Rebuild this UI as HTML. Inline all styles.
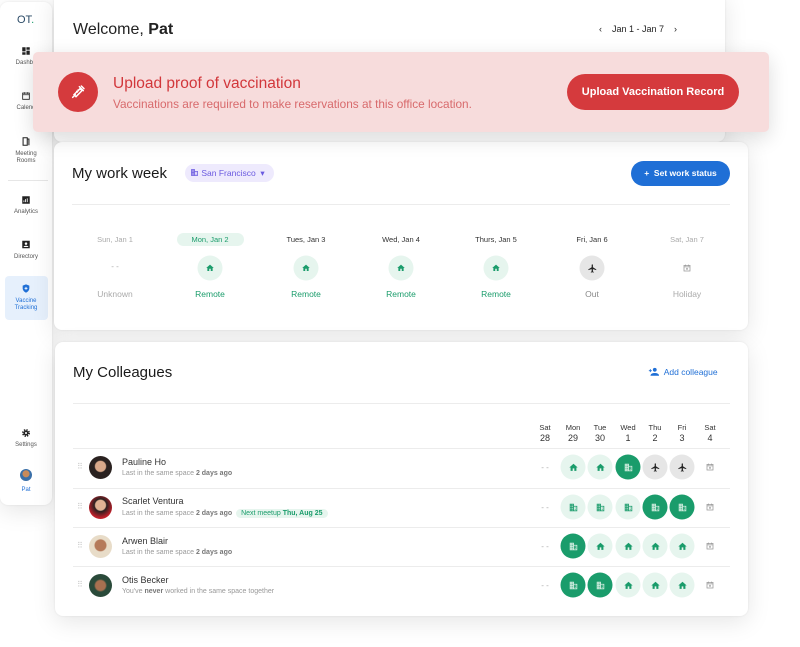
<!DOCTYPE html>
<html><head><meta charset="utf-8"><style>
*{box-sizing:border-box;margin:0;padding:0}
body{width:800px;height:647px;background:#fff;position:relative;overflow:hidden;font-family:"Liberation Sans",sans-serif;color:#222}
.card{position:absolute;background:#fff;border-radius:8px;box-shadow:0 6px 24px rgba(0,0,0,.10),0 0 2px rgba(0,0,0,.08)}
.abs{position:absolute}
.side{left:0;top:2px;width:52px;height:503px}
.nav{position:absolute;left:0;width:52px;text-align:center;font-size:6px;color:#555;line-height:7px}
.nav svg{display:block;margin:0 auto 4px}
.c{position:absolute;text-align:center;transform:translateX(-50%)}
.circ{position:absolute;width:25px;height:25px;border-radius:50%;display:flex;align-items:center;justify-content:center;transform:translate(-50%,-50%)}
.lg{background:#e6f5ee}.dg{background:#1a9c6b}.gy{background:#e6e6e6}
.name{position:absolute;left:122px;font-size:9px;color:#333}
.sub{position:absolute;left:122px;font-size:7px;color:#999}
.sub b{color:#777;font-weight:bold}
.hr{position:absolute;height:1px;background:#ececec}
</style></head><body>
<svg width="0" height="0" style="position:absolute">
<symbol id="home" viewBox="0 0 24 24"><path d="M10 20v-6h4v6h5v-8h3L12 3 2 12h3v8z"/></symbol>
<symbol id="bld" viewBox="0 0 24 24"><path d="M3 21V3h10v5h8v13zM5 5v2h2V5zm4 0v2h2V5zM5 9v2h2V9zm4 0v2h2V9zM5 13v2h2v-2zm4 0v2h2v-2zM5 17v2h2v-2zm4 0v2h2v-2zm4-7v9h6v-9zm2 2h2v2h-2zm0 4h2v2h-2z"/></symbol>
<symbol id="plane" viewBox="0 0 24 24"><path d="M21 16v-2l-8-5V3.5a1.5 1.5 0 0 0-3 0V9l-8 5v2l8-2.5V19l-2 1.5V22l3.5-1 3.5 1v-1.5L13 19v-5.5z"/></symbol>
<symbol id="cal" viewBox="0 0 24 24"><path fill="none" stroke="currentColor" stroke-width="2" d="M4 5h16v15H4zM4 9h16M8 3v4M16 3v4M10 12l4 4M14 12l-4 4"/></symbol>
</svg>

<div class="card side">
 <div class="abs" style="left:17px;top:12px;font-size:11px;color:#2a4a66">OT<span style="color:#1a9c6b">.</span></div>
 <div class="nav" style="top:44px"><svg width="10" height="10" viewBox="0 0 24 24"><path d="M3 3h8v10H3zm10 0h8v6h-8zM3 15h8v6H3zm10-4h8v10h-8z" fill="#222"/></svg>Dashbo</div>
 <div class="nav" style="top:89px"><svg width="10" height="10" viewBox="0 0 24 24"><path d="M4 5h16v15H4zM4 9h16M8 3v4M16 3v4" fill="none" stroke="#222" stroke-width="2"/></svg>Calend</div>
 <div class="nav" style="top:134px"><svg width="10" height="11" viewBox="0 0 24 24"><path d="M5 21V3h10v18zm10-15h4v15" fill="none" stroke="#222" stroke-width="2.5"/></svg>Meeting<br>Rooms</div>
 <div class="abs" style="left:8px;top:178px;width:40px;height:1px;background:#e6e6e6"></div>
 <div class="nav" style="top:193px"><svg width="10" height="10" viewBox="0 0 24 24"><path d="M3 3h18v18H3z" fill="#222"/><path d="M7 17v-4M11 17v-7M15 17v-9" stroke="#fff" stroke-width="2"/></svg>Analytics</div>
 <div class="nav" style="top:237px"><svg width="10" height="11" viewBox="0 0 24 24"><path d="M3 3h18v18H3z" fill="#222"/><circle cx="12" cy="10" r="3" fill="#fff"/><path d="M6 18c1-4 11-4 12 0z" fill="#fff"/></svg>Directory</div>
 <div class="abs" style="left:5px;top:274px;width:43px;height:44px;background:#e6f0fc;border-radius:4px"></div>
 <div class="nav" style="top:281px;color:#1f6fd6"><svg width="10" height="11" viewBox="0 0 24 24"><path d="M12 2l8 3v6c0 5-3.5 9-8 11-4.5-2-8-6-8-11V5z" fill="#1f6fd6"/><path d="M12 8v7M8.5 11.5h7" stroke="#fff" stroke-width="2"/></svg>Vaccine<br>Tracking</div>
 <div class="nav" style="top:426px"><svg width="10" height="10" viewBox="0 0 24 24"><circle cx="12" cy="12" r="7" fill="none" stroke="#222" stroke-width="5" stroke-dasharray="3 2.5"/><circle cx="12" cy="12" r="6" fill="#222"/><circle cx="12" cy="12" r="2.5" fill="#fff"/></svg>Settings</div>
 <div class="abs" style="left:20px;top:467px;width:12px;height:12px;border-radius:50%;background:radial-gradient(circle at 50% 40%,#c98a5a 35%,#3a6fa8 40%)"></div>
 <div class="nav" style="top:485px;color:#1f6fd6">Pat</div>
</div>

<div class="card" style="left:54px;top:-8px;width:671px;height:150px">
 <div class="abs" style="left:19px;top:29px;font-size:16px;color:#222">Welcome, <b>Pat</b></div>
 <div class="abs" style="left:545px;top:32px;font-size:9px;color:#222">‹ &nbsp;&nbsp; Jan 1 - Jan 7 &nbsp;&nbsp; ›</div>
</div>

<div class="card" style="left:54px;top:142px;width:694px;height:188px">
 <div class="abs" style="left:18px;top:23px;font-size:15px;color:#1a1a1a">My work week</div>
 <div class="abs" style="left:131px;top:22px;width:89px;height:18px;border-radius:9px;background:#eeeafd;color:#6a5ae0;font-size:8.5px;line-height:18px;padding-left:5px"><svg width="9" height="9" viewBox="0 0 24 24" style="vertical-align:-1px;fill:#6a5ae0"><use href="#bld"/></svg> San Francisco &nbsp;▾</div>
 <div class="abs" style="left:577px;top:19px;width:99px;height:25px;border-radius:13px;background:#1f6fd6;color:#fff;font-size:8.5px;font-weight:bold;line-height:25px;text-align:center">+ &nbsp;Set work status</div>
 <div class="hr" style="left:18px;top:62px;width:658px"></div>
</div>
<div class="abs" style="left:0;top:0;width:800px;height:647px;pointer-events:none">
 <div class="c" style="left:115px;top:235px;font-size:7.5px;color:#aaa">Sun, Jan 1</div>
 <div class="abs" style="left:177px;top:233px;width:67px;height:13px;border-radius:7px;background:#e6f5ee"></div>
 <div class="c" style="left:210px;top:235px;font-size:7.5px;color:#1a9c6b">Mon, Jan 2</div>
 <div class="c" style="left:306px;top:235px;font-size:7.5px;color:#333">Tues, Jan 3</div>
 <div class="c" style="left:401px;top:235px;font-size:7.5px;color:#333">Wed, Jan 4</div>
 <div class="c" style="left:496px;top:235px;font-size:7.5px;color:#333">Thurs, Jan 5</div>
 <div class="c" style="left:592px;top:235px;font-size:7.5px;color:#333">Fri, Jan 6</div>
 <div class="c" style="left:687px;top:235px;font-size:7.5px;color:#aaa">Sat, Jan 7</div>
 <div class="c" style="left:115px;top:262px;font-size:8px;color:#aaa">- -</div>
 <div class="circ lg" style="left:210px;top:268px"><svg width="9" height="9" fill="#1a9c6b"><use href="#home"/></svg></div>
 <div class="circ lg" style="left:306px;top:268px"><svg width="9" height="9" fill="#1a9c6b"><use href="#home"/></svg></div>
 <div class="circ lg" style="left:401px;top:268px"><svg width="9" height="9" fill="#1a9c6b"><use href="#home"/></svg></div>
 <div class="circ lg" style="left:496px;top:268px"><svg width="9" height="9" fill="#1a9c6b"><use href="#home"/></svg></div>
 <div class="circ gy" style="left:592px;top:268px"><svg width="10" height="10" fill="#222"><use href="#plane"/></svg></div>
 <div class="circ" style="left:687px;top:268px;color:#999"><svg width="9" height="9"><use href="#cal"/></svg></div>
 <div class="c" style="left:115px;top:289px;font-size:8.5px;color:#aaa">Unknown</div>
 <div class="c" style="left:210px;top:289px;font-size:8.5px;color:#1a9c6b">Remote</div>
 <div class="c" style="left:306px;top:289px;font-size:8.5px;color:#1a9c6b">Remote</div>
 <div class="c" style="left:401px;top:289px;font-size:8.5px;color:#1a9c6b">Remote</div>
 <div class="c" style="left:496px;top:289px;font-size:8.5px;color:#1a9c6b">Remote</div>
 <div class="c" style="left:592px;top:289px;font-size:8.5px;color:#888">Out</div>
 <div class="c" style="left:687px;top:289px;font-size:8.5px;color:#aaa">Holiday</div>
</div>

<div class="card" style="left:55px;top:342px;width:693px;height:274px">
 <div class="abs" style="left:18px;top:22px;font-size:15px;color:#1a1a1a">My Colleagues</div>
 <div class="abs" style="left:593px;top:25px;font-size:8.5px;color:#1f6fd6"><svg width="11" height="9" viewBox="0 0 26 20" fill="#1f6fd6" style="vertical-align:-1px"><circle cx="16" cy="6" r="4.5"/><path d="M7 19c1-6 17-6 18 0zM2 8h7M5.5 4.5v7" stroke="#1f6fd6" stroke-width="2"/></svg> &nbsp;Add colleague</div>
 <div class="hr" style="left:18px;top:61px;width:657px"></div>
</div>
<div class="abs" style="left:0;top:0;width:800px;height:647px">
 <div class="c" style="left:545px;top:423px;font-size:7.5px;color:#333;line-height:10px">Sat<br><span style="font-size:9px">28</span></div>
 <div class="c" style="left:573px;top:423px;font-size:7.5px;color:#333;line-height:10px">Mon<br><span style="font-size:9px">29</span></div>
 <div class="c" style="left:600px;top:423px;font-size:7.5px;color:#333;line-height:10px">Tue<br><span style="font-size:9px">30</span></div>
 <div class="c" style="left:628px;top:423px;font-size:7.5px;color:#333;line-height:10px">Wed<br><span style="font-size:9px">1</span></div>
 <div class="c" style="left:655px;top:423px;font-size:7.5px;color:#333;line-height:10px">Thu<br><span style="font-size:9px">2</span></div>
 <div class="c" style="left:682px;top:423px;font-size:7.5px;color:#333;line-height:10px">Fri<br><span style="font-size:9px">3</span></div>
 <div class="c" style="left:710px;top:423px;font-size:7.5px;color:#333;line-height:10px">Sat<br><span style="font-size:9px">4</span></div>

 <div class="hr" style="left:73px;top:448px;width:657px"></div>
 <div class="hr" style="left:73px;top:488px;width:657px"></div>
 <div class="hr" style="left:73px;top:527px;width:657px"></div>
 <div class="hr" style="left:73px;top:566px;width:657px"></div>

 <div class="abs" style="left:77px;top:462px;font-size:8px;color:#ccc">⠿</div>
 <div class="abs" style="left:89px;top:456px;width:23px;height:23px;border-radius:50%;background:radial-gradient(circle at 50% 45%,#d9a98a 30%,#2a2220 36%)"></div>
 <div class="name" style="top:457px">Pauline Ho</div>
 <div class="sub" style="top:470px">Last in the same space <b>2 days ago</b></div>

 <div class="abs" style="left:77px;top:502px;font-size:8px;color:#ccc">⠿</div>
 <div class="abs" style="left:89px;top:496px;width:23px;height:23px;border-radius:50%;background:radial-gradient(circle at 50% 40%,#e0b294 28%,#2a2020 34%,#c0202a 70%)"></div>
 <div class="name" style="top:496px">Scarlet Ventura</div>
 <div class="sub" style="top:510px">Last in the same space <b>2 days ago</b> <span style="background:#e6f5ee;color:#1a9c6b;border-radius:6px;padding:1px 5px;margin-left:2px">Next meetup <b style="color:#1a9c6b">Thu, Aug 25</b></span></div>

 <div class="abs" style="left:77px;top:541px;font-size:8px;color:#ccc">⠿</div>
 <div class="abs" style="left:89px;top:535px;width:23px;height:23px;border-radius:50%;background:radial-gradient(circle at 50% 45%,#b57a5a 32%,#e8dcc8 38%)"></div>
 <div class="name" style="top:536px">Arwen Blair</div>
 <div class="sub" style="top:549px">Last in the same space <b>2 days ago</b></div>

 <div class="abs" style="left:77px;top:580px;font-size:8px;color:#ccc">⠿</div>
 <div class="abs" style="left:89px;top:574px;width:23px;height:23px;border-radius:50%;background:radial-gradient(circle at 50% 50%,#a87050 30%,#2a4a3a 40%)"></div>
 <div class="name" style="top:575px">Otis Becker</div>
 <div class="sub" style="top:588px">You've <b>never</b> worked in the same space together</div>
</div>

<div id="grid"></div>
<script>
var cols=[573,600,628,655,682],rows=[467,507,546,585];
var d=[["lh","lh","db","gp","gp"],["lb","lb","lb","db","db"],["db","lh","lh","lh","lh"],["db","db","lh","lh","lh"]];
var h="";
rows.forEach(function(y,r){
 h+='<div class="c" style="left:545px;top:'+(y-4)+'px;font-size:8px;color:#aaa">- -</div>';
 h+='<div class="circ" style="left:710px;top:'+y+'px;color:#999"><svg width="9" height="9"><use href="#cal"/></svg></div>';
 cols.forEach(function(x,i){var t=d[r][i];
  var cls=t[0]=="l"?"lg":t[0]=="d"?"dg":"gy";
  var fill=t[0]=="l"?"#1a9c6b":t[0]=="d"?"#d8f0e4":"#222";
  var ic=t[1]=="h"?"home":t[1]=="b"?"bld":"plane";
  h+='<div class="circ '+cls+'" style="left:'+x+'px;top:'+y+'px"><svg width="10" height="10" fill="'+fill+'"><use href="#'+ic+'"/></svg></div>';
 });
});
document.getElementById("grid").innerHTML=h;
</script>

<div class="abs" style="left:33px;top:52px;width:736px;height:80px;background:#f7dcdc;border-radius:5px;box-shadow:0 6px 20px rgba(0,0,0,.14)">
 <div class="abs" style="left:25px;top:20px;width:40px;height:40px;border-radius:50%;background:#d53a3d;display:flex;align-items:center;justify-content:center">
  <svg width="16" height="16" viewBox="0 0 24 24" fill="none" stroke="#fff" stroke-width="2.2" stroke-linecap="round"><path d="M4 20l4-4M7 17l-1-1 9-9 3 3-9 9zM14 4l6 6M17 3l4 4M10 11l1 1M12 9l1 1"/></svg>
 </div>
 <div class="abs" style="left:80px;top:23px;font-size:15.5px;color:#d2373b">Upload proof of vaccination</div>
 <div class="abs" style="left:80px;top:45px;font-size:11.8px;color:#d86a6c">Vaccinations are required to make reservations at this office location.</div>
 <div class="abs" style="left:534px;top:22px;width:172px;height:36px;border-radius:18px;background:#d53a3d;color:#fff;font-size:11px;font-weight:bold;line-height:36px;text-align:center">Upload Vaccination Record</div>
</div>
</body></html>
